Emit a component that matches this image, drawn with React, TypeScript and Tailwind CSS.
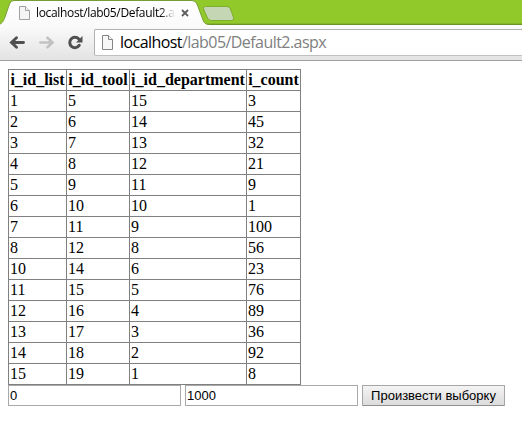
const columns = ['i_id_list', 'i_id_tool', 'i_id_department', 'i_count'];

const rows = [
  [1, 5, 15, 3],
  [2, 6, 14, 45],
  [3, 7, 13, 32],
  [4, 8, 12, 21],
  [5, 9, 11, 9],
  [6, 10, 10, 1],
  [7, 11, 9, 100],
  [8, 12, 8, 56],
  [10, 14, 6, 23],
  [11, 15, 5, 76],
  [12, 16, 4, 89],
  [13, 17, 3, 36],
  [14, 18, 2, 92],
  [15, 19, 1, 8],
];

function PageIcon({ className = '' }: { className?: string }) {
  return (
    <svg width="12" height="15" viewBox="0 0 12 15" fill="#f5f5f5" stroke="currentColor" className={`shrink-0 ${className}`}>
      <path d="M.5.5H6.500L10.500 4.500V13.500H.5Z" />
      <path d="M6.500.5V4.500H10.500" />
    </svg>
  );
}

function TabStrip() {
  return (
    <div className="relative flex h-[25px] items-start bg-[#91c92b]">
      <svg className="absolute inset-0" width="522" height="25" viewBox="0 0 522 25">
        <defs>
          <linearGradient id="tab" x1="0" y1="0" x2="0" y2="1">
            <stop offset="0" stopColor="#fff" />
            <stop offset="1" stopColor="#fafafa" />
          </linearGradient>
        </defs>
        <path d="M0 23.500H522" stroke="#84b729" />
        <path d="M0 24.500H522" stroke="#6d9427" />
        <path
          d="M-3 25C2 24 3 22 5 17L9.500 4Q10.500.5 14 .5H192Q195.500.5 197 4L203 20Q204.500 24.500 209 24.500V26H-3Z"
          fill="url(#tab)"
          stroke="#779e36"
        />
        <path
          d="M205.500 6.500H227Q229.500 6.500 230.500 9L233.500 17.500Q234.300 20.500 231.500 20.500H211.500Q208.800 20.500 207.500 18L203.500 9Q202.500 6.500 205.500 6.500Z"
          fill="#c5d6b5"
          stroke="#7eac2b"
        />
      </svg>
      <PageIcon className="relative ml-[19px] mt-[6px] text-[#a0a0a0]" />
      <div className="relative ml-[5px] mt-[4px] h-[18px] w-[138px] overflow-hidden whitespace-nowrap font-['Open_Sans',sans-serif] text-[12px] leading-[18px] tracking-[-0.34px] text-black [mask-image:linear-gradient(to_right,#000_124px,transparent_139px)]">
        localhost/lab05/Default2.aspx
      </div>
      <svg className="relative ml-[7px] mt-[9px]" width="8" height="8" viewBox="0 0 8 8">
        <path d="M1 1L7 7M7 1L1 7" stroke="#5c5c5c" strokeWidth="1.800" />
      </svg>
    </div>
  );
}

function Toolbar() {
  return (
    <div className="flex h-[36px] items-start border-b border-[#a0a0a0] bg-linear-to-b from-[#fbfbfb] to-[#e3e3e3] pt-[4px]">
      <svg className="ml-[9px] mt-[6px] shrink-0" width="17" height="15" viewBox="0 0 17 15" fill="none" stroke="#505050" strokeWidth="2.900" strokeLinecap="round">
        <path d="M14.500 7.500H3M7.500 2.800L2.500 7.500L7.500 12.200" />
      </svg>
      <svg className="ml-[12px] mt-[6px] shrink-0" width="17" height="15" viewBox="0 0 17 15" fill="none" stroke="#c2c2c2" strokeWidth="2.700" strokeLinecap="round">
        <path d="M2.500 7.500H14M9.500 2.800L14.500 7.500L9.500 12.200" />
      </svg>
      <svg className="ml-[12px] mt-[6px] shrink-0" width="17" height="15" viewBox="0 0 17 15">
        <path d="M11.800 4A5.200 5.200 0 1 0 12.300 10.300" fill="none" stroke="#505050" strokeWidth="3" strokeLinecap="round" />
        <path d="M15.500 1V7.500H9Z" fill="#505050" />
      </svg>
      <div className="ml-[10px] flex h-[27px] flex-1 items-start rounded-l-[2px] border border-r-0 border-[#b0b0b0] border-b-[#c0c0c0] bg-white">
        <svg width="12" height="15" viewBox="0 0 12 15" fill="#f7f7f7" stroke="#858585" className="ml-[7px] mt-[5px] shrink-0">
          <path d="M.5.5H6.500L10.500 4.500V14.500H.5Z" />
          <path d="M6.500.5V4.500H10.500" />
        </svg>
        <div className="ml-[6px] whitespace-nowrap font-['Open_Sans',sans-serif] text-[16px] leading-[25px] tracking-[-0.56px] text-[#808080]">
          <span className="text-black">localhost</span>/lab05/Default2.aspx
        </div>
      </div>
    </div>
  );
}

export default function App() {
  return (
    <div className="h-[426px] w-[522px] overflow-hidden bg-white">
      <TabStrip />
      <Toolbar />
      <main className="px-2 pt-2 text-black">
        <table className="w-[293px] table-fixed border-separate border-spacing-0 border-l border-t border-[#808080] font-['Liberation_Serif',serif] text-[16px] leading-[18px]">
          <colgroup>
            <col className="w-[58px]" />
            <col className="w-[63px]" />
            <col className="w-[117px]" />
            <col className="w-[54px]" />
          </colgroup>
          <thead>
            <tr>
              {columns.map((name) => (
                <th key={name} className="h-[21px] whitespace-nowrap border-b border-r border-[#808080] p-px text-center font-bold">
                  {name}
                </th>
              ))}
            </tr>
          </thead>
          <tbody>
            {rows.map((row) => (
              <tr key={row[0]}>
                {row.map((value, i) => (
                  <td key={i} className="h-[21px] border-b border-r border-[#808080] p-px">
                    {value}
                  </td>
                ))}
              </tr>
            ))}
          </tbody>
        </table>
        <form className="flex gap-[4px] font-['Liberation_Sans',sans-serif] text-[13px]">
          <input className="h-[21px] w-[173px] border border-[#a9a9a9] bg-white px-px" defaultValue="0" />
          <input className="h-[21px] w-[173px] border border-[#a9a9a9] bg-white px-px" defaultValue="1000" />
          <button
            type="button"
            className="h-[21px] w-[143px] whitespace-nowrap rounded-[1px] border border-[#a6a6a6] border-b-[#8f8f8f] bg-linear-to-b from-[#f4f4f4] to-[#dcdcdc] leading-[18px]"
          >
            Произвести выборку
          </button>
        </form>
      </main>
    </div>
  );
}
